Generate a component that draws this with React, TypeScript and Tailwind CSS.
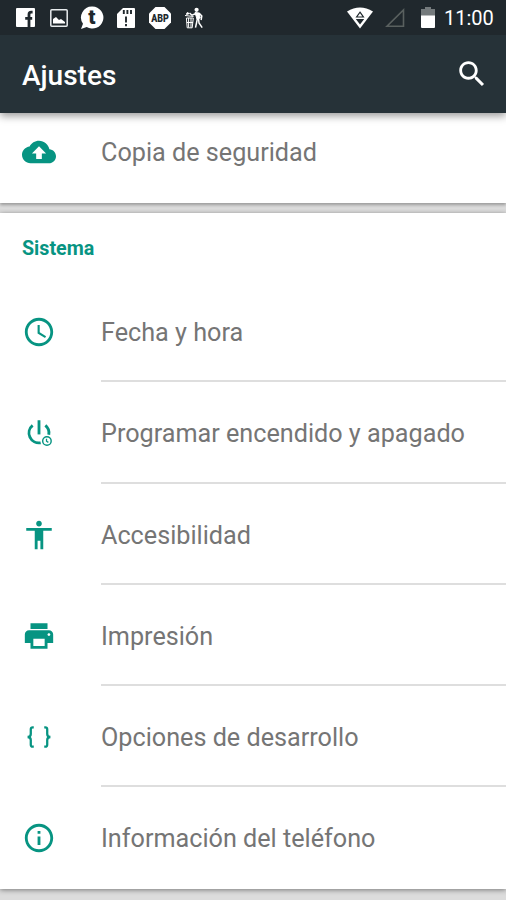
import type { ReactNode } from "react";

type Item = { label: string; icon: ReactNode };

const Icon = ({ children }: { children: ReactNode }) => (
  <svg viewBox="0 0 24 24" className="h-[34px] w-[34px] shrink-0 fill-[#079482]">
    {children}
  </svg>
);

const backup: Item = {
  label: "Copia de seguridad",
  icon: (
    <Icon>
      <path d="M19.35 10.04C18.67 6.59 15.64 4 12 4 9.11 4 6.6 5.64 5.35 8.04 2.34 8.36 0 10.91 0 14c0 3.31 2.69 6 6 6h13c2.76 0 5-2.24 5-5 0-2.64-2.05-4.78-4.65-4.96zM14 13v4h-4v-4H7l5-5 5 5h-3z" />
    </Icon>
  ),
};

const systemItems: Item[] = [
  {
    label: "Fecha y hora",
    icon: (
      <Icon>
        <path d="M11.99 2C6.47 2 2 6.48 2 12s4.47 10 9.99 10C17.52 22 22 17.52 22 12S17.52 2 11.99 2zM12 20c-4.42 0-8-3.58-8-8s3.58-8 8-8 8 3.58 8 8-3.58 8-8 8zm.5-13H11v6l5.25 3.15.75-1.23-4.5-2.67z" />
      </Icon>
    ),
  },
  {
    label: "Programar encendido y apagado",
    icon: (
      <Icon>
        <path d="M11 3h2v10h-2z" />
        <g fill="none" stroke="#079482">
          <path strokeWidth="2" d="M7.5 6.6A7 7 0 0 0 13.2 18.9M16.5 6.6A7 7 0 0 1 18.9 13.2" />
          <circle cx="17.6" cy="17.6" r="3" strokeWidth="1" />
          <path strokeWidth=".9" d="M17.3 16v1.8l1.3.8" />
        </g>
      </Icon>
    ),
  },
  {
    label: "Accesibilidad",
    icon: (
      <Icon>
        <path d="M12 2c1.1 0 2 .9 2 2s-.9 2-2 2-2-.9-2-2 .9-2 2-2zm9 7h-6v13h-2v-6h-2v6H9V9H3V7h18v2z" />
      </Icon>
    ),
  },
  {
    label: "Impresión",
    icon: (
      <Icon>
        <path d="M19 8H5c-1.66 0-3 1.34-3 3v6h4v4h12v-4h4v-6c0-1.66-1.34-3-3-3zm-3 11H8v-5h8v5zm3-7c-.55 0-1-.45-1-1s.45-1 1-1 1 .45 1 1-.45 1-1 1zm-1-9H6v4h12V3z" />
      </Icon>
    ),
  },
  {
    label: "Opciones de desarrollo",
    icon: (
      <Icon>
        <path
          fill="none"
          stroke="#079482"
          strokeWidth="1.6"
          d="M8.3 5.2H7.6Q6.2 5.2 6.2 6.6V9.8Q6.2 11.8 4 12Q6.2 12.2 6.2 14.2V17.4Q6.2 18.8 7.6 18.8H8.3M15.7 5.2H16.4Q17.8 5.2 17.8 6.6V9.8Q17.8 11.8 20 12Q17.8 12.2 17.8 14.2V17.4Q17.8 18.8 16.4 18.8H15.7"
        />
      </Icon>
    ),
  },
  {
    label: "Información del teléfono",
    icon: (
      <Icon>
        <path d="M11 17h2v-6h-2v6zm1-15C6.48 2 2 6.48 2 12s4.48 10 10 10 10-4.48 10-10S17.52 2 12 2zm0 18c-4.41 0-8-3.59-8-8s3.59-8 8-8 8 3.59 8 8-3.59 8-8 8zM11 9h2V7h-2v2z" />
      </Icon>
    ),
  },
];

const StatusBar = () => (
  <div className="flex h-[35px] items-center bg-[#20282d] pl-4 pr-3 text-white">
    <svg viewBox="0 0 19 19" className="h-[19px] w-[19px]">
      <rect width="19" height="19" rx="1" fill="#fff" />
      <path d="M16.6 4.2h-1.4q-2.2 0-2.2 2.2V19M9.2 10.4h7" fill="none" stroke="#20282d" strokeWidth="2.8" />
    </svg>
    <svg viewBox="0 0 18 18" className="ml-[15px] h-[18px] w-[18px]">
      <rect x=".8" y=".8" width="16.4" height="16.4" rx="1" fill="none" stroke="#e8ecee" strokeWidth="1.5" />
      <path d="M3 14.5V10l3-2 3 3 2-1 4 3v1.5z" fill="#fff" />
    </svg>
    <svg viewBox="0 0 24 24" className="ml-[12px] h-6 w-6">
      <path d="M12.5 .5a11 11 0 1 1-5.8 20.4L1 23l2-5.2A11 11 0 0 1 12.5 .5z" fill="#fff" />
      <text x="8.2" y="18" fontSize="21" fontWeight="900" fill="#20282d" className="font-['Roboto',sans-serif]">
        t
      </text>
    </svg>
    <svg viewBox="0 0 18 20" className="ml-[13px] h-5 w-[18px]">
      <path d="M6 0h11q1 0 1 1v18q0 1-1 1H1q-1 0-1-1V6z" fill="#fff" />
      <path d="M6.8 2v4M10.4 2v4M14 2v4M9 8.5v6M9 16v2.2" stroke="#20282d" strokeWidth="1.9" />
    </svg>
    <svg viewBox="0 0 22 22" className="ml-[14px] h-[22px] w-[22px]">
      <path d="M6.5 0h9L22 6.5v9L15.5 22h-9L0 15.5v-9z" fill="#fff" />
      <text x="2.2" y="14.8" fontSize="10.5" fontWeight="900" textLength="17.6" lengthAdjust="spacingAndGlyphs" fill="#20282d" className="font-['Roboto',sans-serif]">
        ABP
      </text>
    </svg>
    <svg viewBox="0 0 18 22" className="ml-[14px] h-[22px] w-[18px]" fill="none" stroke="#fff">
      <circle cx="11.6" cy="2.8" r="2.1" fill="#fff" stroke="none" />
      <path d="M10 5.5l4.2.5 1 5-3.2 1z" fill="#fff" />
      <path d="M11 6.5L7 8.2 4.5 6M14 6l2.8 3-.7 4M13.5 11l.5 5 3.2 4.7M12.5 11l-1 5-1 4.7" strokeWidth="1.5" />
      <path d="M0 8.5l8.5 1M1.5 11h6.8M1.4 11l.8 9.8h5L8.3 11M3.6 11v9.5M6 11v9.5M1.8 15.5H8" strokeWidth="1" />
      <path d="M2 5.5l2 1.4M1 7h2" strokeWidth="1.5" />
    </svg>
    <svg viewBox="0 0 26 22" className="ml-auto h-[22px] w-[26px]">
      <path d="M0 4.6Q13-3.8 26 4.6L13 21.5z" fill="#fff" />
      <path d="M13 5.2l3.4 4.8H9.6z" fill="none" stroke="#20282d" strokeWidth="1.2" />
      <path d="M8.8 12h8.4L13 17.6z" fill="#20282d" />
    </svg>
    <svg viewBox="0 0 20 20" className="ml-3 h-5 w-5">
      <path d="M18.5 2v16.3H2z" fill="none" stroke="#59605f" strokeWidth="1.6" />
    </svg>
    <svg viewBox="0 0 14 21" className="ml-4 h-[21px] w-[14px]">
      <path d="M4 0h6v2h4v7H0V2h4z" fill="#747a7c" />
      <path d="M0 8.5h14V20q0 1-1 1H1q-1 0-1-1z" fill="#fff" />
    </svg>
    <span className="ml-[9px] w-[50px] whitespace-nowrap pt-px text-[20px] leading-none">11:00</span>
  </div>
);

const SettingRow = ({ label, icon }: Item) => (
  <>
    {icon}
    <span className="ml-[45px] whitespace-nowrap pt-[2px] text-[25.2px] leading-8 text-[#757575]">
      {label}
    </span>
  </>
);

export default function App() {
  return (
    <div className="flex h-[900px] w-[506px] flex-col overflow-hidden bg-[#dcdcdc] font-['Roboto',sans-serif]">
      <header className="relative z-10 shrink-0 bg-[#263238] shadow-[0_3px_8px_rgba(0,0,0,0.4)]">
        <StatusBar />
        <div className="flex h-[78px] items-center justify-between pl-[22px] pr-[17px]">
          <h1 className="pt-[3px] text-[28px] font-medium leading-8 text-white">Ajustes</h1>
          <svg viewBox="0 0 24 24" className="h-[34px] w-[34px] fill-white">
            <path d="M15.5 14h-.79l-.28-.27C15.41 12.59 16 11.11 16 9.5 16 5.91 13.09 3 9.5 3S3 5.91 3 9.5 5.91 16 9.5 16c1.61 0 3.09-.59 4.23-1.57l.27.28v.79l5 4.99L20.49 19l-4.99-5zm-6 0C7.01 14 5 11.99 5 9.5S7.01 5 9.5 5 14 7.01 14 9.5 11.99 14 9.5 14z" />
          </svg>
        </div>
      </header>

      <section className="flex h-[90px] shrink-0 items-start bg-white pl-[22px] pt-[22px] shadow-[0_2px_3px_rgba(0,0,0,0.3)]">
        <SettingRow {...backup} />
      </section>

      <section className="mt-[10px] h-[676px] shrink-0 bg-white shadow-[0_1px_5px_rgba(0,0,0,0.45)]">
        <h2 className="flex h-[68px] items-center pl-[22px] pt-[4px] text-[19.7px] font-bold text-[#079482]">
          Sistema
        </h2>
        <ul>
          {systemItems.map((item, i) => (
            <li key={item.label} className="flex h-[101.25px] flex-col pl-[22px]">
              <div className="flex flex-1 items-center pt-[3px]">
                <SettingRow {...item} />
              </div>
              {i < systemItems.length - 1 ? (
                <div className="ml-[79px] h-[2px] shrink-0 bg-[#dedede]" />
              ) : (
                <div className="h-[2px] shrink-0" />
              )}
            </li>
          ))}
        </ul>
      </section>
    </div>
  );
}
